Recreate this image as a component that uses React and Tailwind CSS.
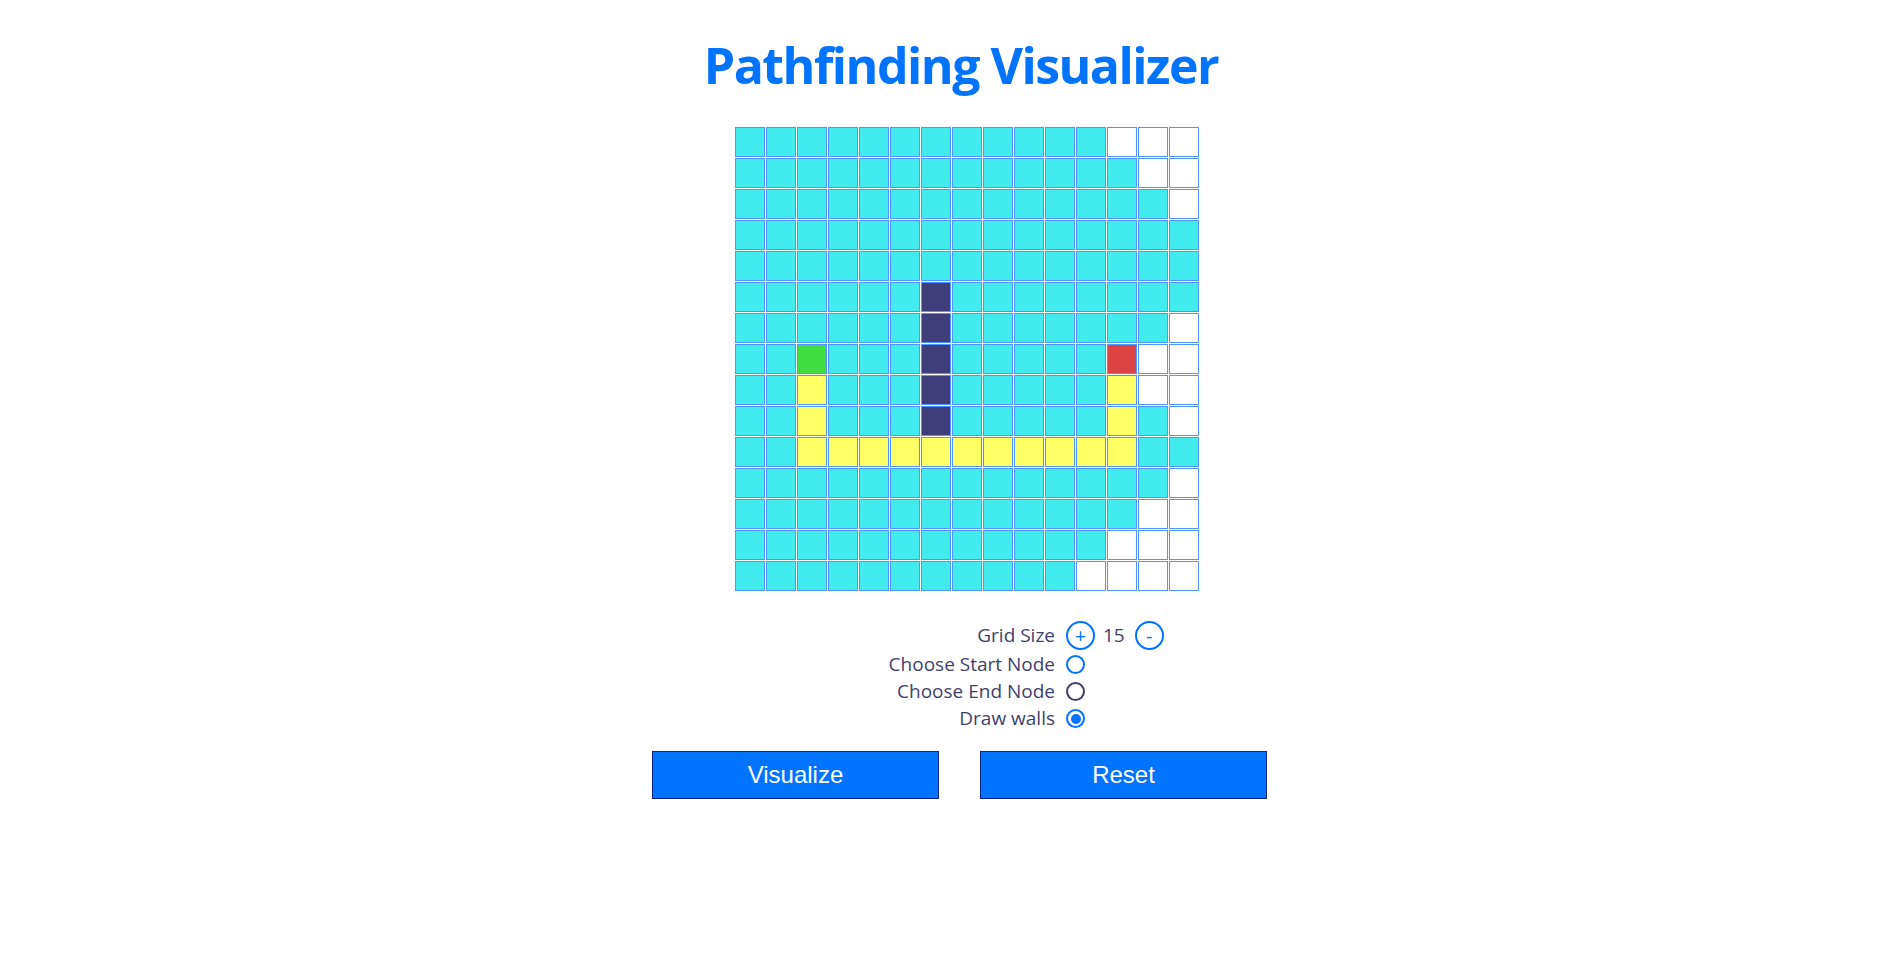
import { useState } from "react";

// cell codes: c = visited, w = unvisited, x = wall, s = start, E = end, p = path
const ROWS = [
  "ccccccccccccwww",
  "cccccccccccccww",
  "ccccccccccccccw",
  "ccccccccccccccc",
  "ccccccccccccccc",
  "ccccccxcccccccc",
  "ccccccxcccccccw",
  "ccscccxcccccEww",
  "ccpcccxcccccpww",
  "ccpcccxcccccpcw",
  "ccpppppppppppcc",
  "ccccccccccccccw",
  "cccccccccccccww",
  "ccccccccccccwww",
  "cccccccccccwwww",
];

const CELL_BG = {
  c: "bg-[#42ebee]",
  w: "bg-white",
  x: "bg-[#403e7a]",
  s: "bg-[#40dc40]",
  E: "bg-[#dc4444]",
  p: "bg-[#ffff66]",
};

function Cell({ kind }) {
  return (
    <div
      className={
        "w-[30px] h-[30px] border border-[#4f96ff] " + (CELL_BG[kind] || "bg-white")
      }
    />
  );
}

function Radio({ checked, dark }) {
  return (
    <div
      className={
        "w-[19px] h-[19px] rounded-full border-2 flex items-center justify-center bg-white " +
        (dark ? "border-[#3f3f6e]" : "border-[#0073ff]")
      }
    >
      {checked && <div className="w-[10px] h-[10px] rounded-full bg-[#0073ff]" />}
    </div>
  );
}

function RoundButton({ children }) {
  return (
    <button className="w-[29px] h-[29px] rounded-full border-2 border-[#0073ff] text-[#0073ff] flex items-center justify-center text-[20px] leading-none bg-white">
      {children}
    </button>
  );
}

export default function App() {
  const [mode, setMode] = useState("walls");

  return (
    <div
      className="min-h-screen bg-white"
      style={{ fontFamily: "'Open Sans', 'Noto Sans', sans-serif" }}
    >
      <h1 className="pt-[40px] pl-[32px] text-center text-[50px] leading-none font-bold text-[#0073ff] tracking-[-1.5px]">
        Pathfinding Visualizer
      </h1>

      <div className="mt-[37px] flex justify-center pl-[44px]">
        <div className="grid grid-cols-[repeat(15,30px)] gap-[1px]">
          {ROWS.map((row, r) =>
            row.split("").map((k, c) => <Cell key={r + "-" + c} kind={k} />)
          )}
        </div>
      </div>

      <div className="mt-[29px] flex justify-center pl-[231px] text-[19px] text-[#3f3f6e]">
        <div className="grid grid-cols-[200px_200px] gap-x-[11px]">
          <div className="h-[31px] flex items-center justify-end">Grid Size</div>
          <div className="h-[31px] flex items-center">
            <RoundButton>+</RoundButton>
            <span className="ml-[8px] mr-[10px] leading-none">15</span>
            <RoundButton>-</RoundButton>
          </div>

          <div className="h-[27px] flex items-center justify-end">Choose Start Node</div>
          <div className="h-[27px] flex items-center" onClick={() => setMode("start")}>
            <Radio checked={mode === "start"} />
          </div>

          <div className="h-[27px] flex items-center justify-end">Choose End Node</div>
          <div className="h-[27px] flex items-center" onClick={() => setMode("end")}>
            <Radio checked={mode === "end"} dark />
          </div>

          <div className="h-[27px] flex items-center justify-end">Draw walls</div>
          <div className="h-[27px] flex items-center" onClick={() => setMode("walls")}>
            <Radio checked={mode === "walls"} />
          </div>
        </div>
      </div>

      <div
        className="mt-[19px] flex justify-center gap-[41px] pl-[29px]"
        style={{ fontFamily: "'Liberation Sans', Arial, sans-serif" }}
      >
        <button className="w-[287px] h-[48px] bg-[#0074ff] border border-[#0a2288] text-white text-[24px]">
          Visualize
        </button>
        <button className="w-[287px] h-[48px] bg-[#0074ff] border border-[#0a2288] text-white text-[24px]">
          Reset
        </button>
      </div>
    </div>
  );
}
